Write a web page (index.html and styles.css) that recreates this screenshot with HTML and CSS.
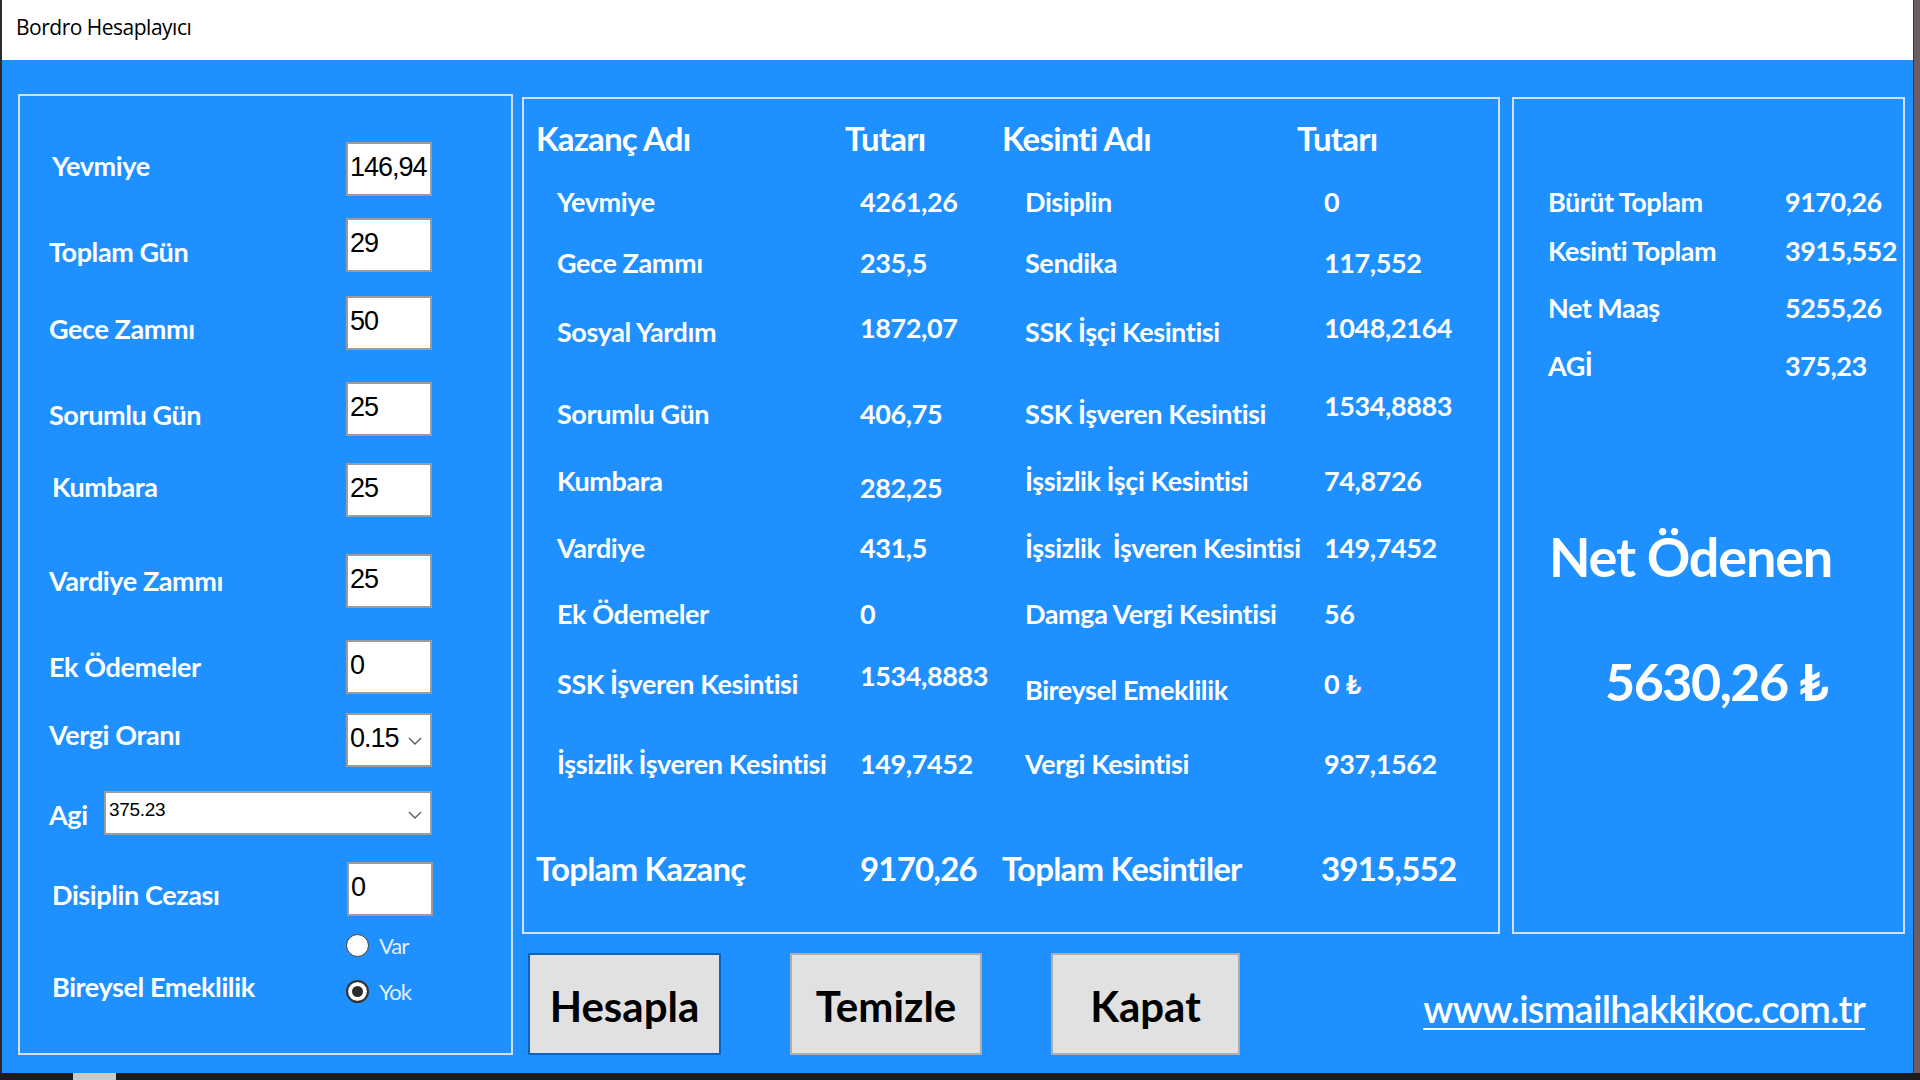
FILE: index.html
```html
<!DOCTYPE html>
<html lang="tr">
<head>
<meta charset="utf-8">
<title>Bordro Hesaplayıcı</title>
<link rel="stylesheet" href="styles.css">
</head>
<body>
<div class="screen">
  <div class="window">
    <div class="titlebar">Bordro Hesaplayıcı</div>
    <div class="client">
      <section class="inputs">
        <div class="field"><span class="lbl in3 up3">Yevmiye</span><div class="tb">146,94</div></div>
        <div class="field"><span class="lbl dn7">Toplam Gün</span><div class="tb">29</div></div>
        <div class="field"><span class="lbl dn6">Gece Zammı</span><div class="tb">50</div></div>
        <div class="field"><span class="lbl dn6">Sorumlu Gün</span><div class="tb">25</div></div>
        <div class="field"><span class="lbl in3 up3">Kumbara</span><div class="tb">25</div></div>
        <div class="field"><span class="lbl">Vardiye Zammı</span><div class="tb">25</div></div>
        <div class="field"><span class="lbl">Ek Ödemeler</span><div class="tb">0</div></div>
        <div class="field"><span class="lbl up5">Vergi Oranı</span><div class="tb combo">0.15<svg class="chev" viewBox="0 0 14 8" width="14" height="8"><polyline points="1,1 7,7 13,1"/></svg></div></div>
        <div class="field agi"><span class="lbl dn2">Agi</span><div class="tb combo wide">375.23<svg class="chev" viewBox="0 0 14 8" width="14" height="8"><polyline points="1,1 7,7 13,1"/></svg></div></div>
        <div class="field"><span class="lbl in3 dn6">Disiplin Cezası</span><div class="tb shift1">0</div></div>
        <div class="field radio-row">
          <span class="lbl in3 bottom">Bireysel Emeklilik</span>
          <div class="radios">
            <div class="radio"><span class="dot"></span><span class="rtxt">Var</span></div>
            <div class="radio"><span class="dot on"></span><span class="rtxt">Yok</span></div>
          </div>
        </div>
      </section>

      <div class="main">
        <div class="panels">
          <section class="table">
            <div class="cell h">Kazanç Adı</div>
            <div class="cell h">Tutarı</div>
            <div class="cell h">Kesinti Adı</div>
            <div class="cell h">Tutarı</div>

            <div class="cell b i1">Yevmiye</div>
            <div class="cell b i2">4261,26</div>
            <div class="cell b i3">Disiplin</div>
            <div class="cell b i4">0</div>

            <div class="cell b i1">Gece Zammı</div>
            <div class="cell b i2">235,5</div>
            <div class="cell b i3">Sendika</div>
            <div class="cell b i4">117,552</div>

            <div class="cell b i1">Sosyal Yardım</div>
            <div class="cell b i2 up4">1872,07</div>
            <div class="cell b i3">SSK İşçi Kesintisi</div>
            <div class="cell b i4 up4">1048,2164</div>

            <div class="cell b i1">Sorumlu Gün</div>
            <div class="cell b i2">406,75</div>
            <div class="cell b i3">SSK İşveren Kesintisi</div>
            <div class="cell b i4 up8">1534,8883</div>

            <div class="cell b i1">Kumbara</div>
            <div class="cell b i2 dn7c">282,25</div>
            <div class="cell b i3">İşsizlik İşçi Kesintisi</div>
            <div class="cell b i4">74,8726</div>

            <div class="cell b i1">Vardiye</div>
            <div class="cell b i2">431,5</div>
            <div class="cell b i3">İşsizlik&nbsp; İşveren Kesintisi</div>
            <div class="cell b i4">149,7452</div>

            <div class="cell b i1">Ek Ödemeler</div>
            <div class="cell b i2">0</div>
            <div class="cell b i3">Damga Vergi Kesintisi</div>
            <div class="cell b i4">56</div>

            <div class="cell b i1">SSK İşveren Kesintisi</div>
            <div class="cell b i2 up8">1534,8883</div>
            <div class="cell b i3 dn6c">Bireysel Emeklilik</div>
            <div class="cell b i4">0 ₺</div>

            <div class="cell b i1">İşsizlik İşveren Kesintisi</div>
            <div class="cell b i2">149,7452</div>
            <div class="cell b i3">Vergi Kesintisi</div>
            <div class="cell b i4">937,1562</div>

            <div class="cell h">Toplam Kazanç</div>
            <div class="cell h i2">9170,26</div>
            <div class="cell h">Toplam Kesintiler</div>
            <div class="cell h i4f">3915,552</div>
          </section>

          <section class="summary">
            <div class="srow"><span>Bürüt Toplam</span><span>9170,26</span></div>
            <div class="srow s2"><span>Kesinti Toplam</span><span>3915,552</span></div>
            <div class="srow s3"><span>Net Maaş</span><span>5255,26</span></div>
            <div class="srow s4"><span>AGİ</span><span>375,23</span></div>
            <div class="net-title">Net Ödenen</div>
            <div class="net-amount">5630,26 ₺</div>
          </section>
        </div>

        <div class="actions">
          <div class="btn primary">Hesapla</div>
          <div class="btn clear">Temizle</div>
          <div class="btn close">Kapat</div>
          <a class="link" href="#">www.ismailhakkikoc.com.tr</a>
        </div>
      </div>
    </div>
  </div>
  <div class="desk"></div>
</div>
<div class="taskbar">
  <span class="seg dark w73"></span>
  <span class="seg light w43"></span>
  <span class="seg dark grow"></span>
</div>
</body>
</html>
```

FILE: styles.css
```css
html, body {
  margin: 0;
  padding: 0;
}

body {
  width: 1920px;
  height: 1080px;
  overflow: hidden;
  background: #1c1c1c;
  font-family: "Lato", "Noto Sans", "DejaVu Sans", sans-serif;
}

.screen {
  display: flex;
  height: 1073px;
}

.window {
  width: 1911px;
  border-left: 2px solid #2b2b2b;
  display: flex;
  flex-direction: column;
}

.desk {
  flex: 1;
  background: #6b5c65;
  border-left: 1px solid #3d343a;
}

.titlebar {
  height: 60px;
  box-sizing: border-box;
  background: #ffffff;
  padding: 0 0 6px 14px;
  display: flex;
  align-items: center;
  font-family: "Open Sans", "Noto Sans", sans-serif;
  font-size: 21px;
  letter-spacing: -0.5px;
  color: #000;
}

.client {
  flex: 1;
  background: #1e90ff;
  display: flex;
  align-items: flex-start;
  padding: 34px 0 0 16px;
}

/* ---------- left input group ---------- */
.inputs {
  width: 495px;
  height: 961px;
  box-sizing: border-box;
  border: 2px solid #cfe0f5;
  padding: 46px 79px 0 29px;
  display: grid;
  grid-template-rows: 76px 78px 86px 81px 91px 86px 73px 78px 71px 71px 1fr;
}

.field {
  display: flex;
  align-items: center;
  justify-content: space-between;
  height: 54px;
  align-self: start;
}

.field.agi {
  height: 44px;
}

.lbl {
  font-weight: 700;
  font-size: 27px;
  letter-spacing: -0.4px;
  line-height: 34px;
  color: #ffffff;
  white-space: nowrap;
}

.in3 { padding-left: 3px; }
.up3 { margin-bottom: 6px; }
.up5 { margin-bottom: 10px; }
.dn2 { margin-top: 4px; }
.dn6 { margin-top: 12px; }
.dn7 { margin-top: 14px; }

.tb {
  width: 86px;
  height: 54px;
  box-sizing: border-box;
  background: #ffffff;
  border: 2px solid #9c9c9c;
  padding: 0 0 3px 2px;
  display: flex;
  align-items: center;
  font-family: "Liberation Sans", Arial, sans-serif;
  font-size: 27px;
  letter-spacing: -1px;
  color: #000;
}

.tb.shift1 {
  margin-right: -1px;
}

.combo {
  justify-content: space-between;
  padding-right: 8px;
}

.combo.wide {
  width: 328px;
  height: 44px;
  font-size: 19px;
  letter-spacing: -0.3px;
  padding: 0 8px 6px 3px;
}

.chev {
  fill: none;
  stroke: #5a5a5a;
  stroke-width: 1.4;
  flex: none;
}

.combo .chev {
  margin-top: 4px;
}

.combo.wide .chev {
  margin-top: 10px;
}

.radio-row {
  height: 70px;
  align-items: flex-end;
}

.lbl.bottom {
  margin-bottom: -1px;
}

.radios {
  width: 86px;
  display: flex;
  flex-direction: column;
  gap: 22px;
}

.radio {
  display: flex;
  align-items: center;
  height: 24px;
  gap: 10px;
}

.dot {
  width: 23px;
  height: 23px;
  box-sizing: border-box;
  border-radius: 50%;
  background: #ffffff;
  border: 1.5px solid #3a3a3a;
  flex: none;
}

.dot.on {
  border: 2px solid #333;
  box-shadow: inset 0 0 0 4px #ffffff, inset 0 0 0 12px #2b2b2b;
}

.rtxt {
  font-size: 22px;
  letter-spacing: -1px;
  color: #e6eefc;
}

/* ---------- right side ---------- */
.main {
  width: 1383px;
  margin: 3px 0 0 9px;
  display: flex;
  flex-direction: column;
}

.panels {
  display: flex;
  gap: 12px;
  height: 837px;
}

.table {
  width: 978px;
  box-sizing: border-box;
  border: 2px solid #cfe0f5;
  padding: 19px 0 0 12px;
  display: grid;
  grid-template-columns: 309px 157px 295px 1fr;
  grid-template-rows: 63px 61px 69px 82px 67px 67px 66px 70px 80px 105px 40px;
  align-items: start;
}

.cell {
  height: 40px;
  display: flex;
  align-items: center;
  white-space: nowrap;
  color: #ffffff;
}

.h {
  font-size: 33px;
  font-weight: 700;
  letter-spacing: -0.8px;
}

.b {
  font-size: 27px;
  font-weight: 700;
  letter-spacing: -0.4px;
}

.i1 { padding-left: 21px; }
.i2 { padding-left: 15px; }
.i3 { padding-left: 23px; }
.i4 { padding-left: 27px; }
.i4f { padding-left: 24px; }

.up4 { margin-top: -4px; }
.up8 { margin-top: -8px; }
.dn6c { margin-top: 6px; }
.dn7c { margin-top: 7px; }

.summary {
  width: 393px;
  box-sizing: border-box;
  border: 2px solid #cfe0f5;
  padding: 82px 0 0 34px;
  display: flex;
  flex-direction: column;
  color: #ffffff;
}

.srow {
  display: grid;
  grid-template-columns: 237px auto;
  height: 40px;
  align-items: center;
  font-size: 27px;
  font-weight: 700;
  letter-spacing: -0.5px;
  white-space: nowrap;
}

.s2 { margin-top: 9px; }
.s3 { margin-top: 17px; }
.s4 { margin-top: 18px; }

.net-title {
  margin-top: 140px;
  padding-left: 1px;
  height: 64px;
  line-height: 64px;
  font-size: 54px;
  font-weight: 700;
  letter-spacing: -1.2px;
  white-space: nowrap;
}

.net-amount {
  margin-top: 62px;
  padding-left: 57px;
  height: 60px;
  line-height: 60px;
  font-size: 52px;
  font-weight: 700;
  letter-spacing: -1.5px;
  white-space: nowrap;
}

.actions {
  display: flex;
  align-items: center;
  margin-top: 19px;
  height: 102px;
}

.btn {
  height: 102px;
  box-sizing: border-box;
  background: #e1e1e1;
  border: 2px solid #adadad;
  display: flex;
  align-items: center;
  justify-content: center;
  font-size: 42px;
  font-weight: 700;
  color: #000000;
  padding-top: 4px;
}

.btn.primary {
  width: 193px;
  margin-left: 6px;
  border-color: #0b64c0;
}

.btn.clear {
  width: 192px;
  margin-left: 69px;
}

.btn.close {
  width: 189px;
  margin-left: 69px;
}

.link {
  margin-left: auto;
  margin-right: 40px;
  padding-top: 8px;
  font-size: 38px;
  font-weight: 600;
  letter-spacing: -0.7px;
  color: #ffffff;
  text-decoration: underline;
  text-decoration-thickness: 2px;
  text-underline-offset: 5px;
  white-space: nowrap;
}

/* ---------- bottom strip ---------- */
.taskbar {
  display: flex;
  height: 7px;
}

.seg { display: block; height: 7px; }
.seg.dark { background: #1c1c1c; }
.seg.light { background: #c9c9c9; }
.w73 { width: 73px; }
.w43 { width: 43px; }
.grow { flex: 1; }
```
